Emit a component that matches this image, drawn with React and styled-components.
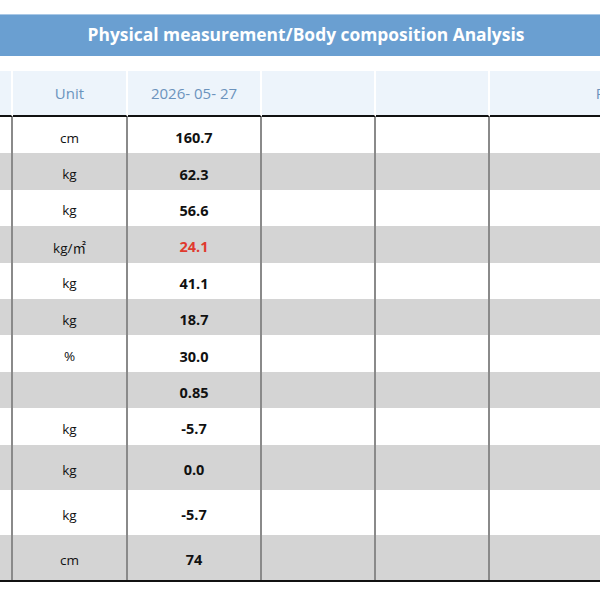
import React from 'react';
import styled, { createGlobalStyle } from 'styled-components';

const GlobalStyle = createGlobalStyle`
  html, body {
    margin: 0;
    padding: 0;
    background: #fff;
    font-family: "Open Sans", "Noto Sans CJK KR", sans-serif;
  }
`;

const rows = [
  { unit: 'cm', value: '160.7' },
  { unit: 'kg', value: '62.3', shade: true },
  { unit: 'kg', value: '56.6' },
  { unit: 'kg/㎡', value: '24.1', shade: true, alert: true },
  { unit: 'kg', value: '41.1' },
  { unit: 'kg', value: '18.7', shade: true },
  { unit: '%', value: '30.0' },
  { unit: '', value: '0.85', shade: true },
  { unit: 'kg', value: '-5.7' },
  { unit: 'kg', value: '0.0', shade: true, tall: true },
  { unit: 'kg', value: '-5.7', tall: true },
  { unit: 'cm', value: '74', shade: true, tall: true },
];

function App() {
  return (
    <Page>
      <GlobalStyle />
      <Sheet>
        <TitleBar>Physical measurement/Body composition Analysis</TitleBar>
        <Table>
          <colgroup>
            <col style={{ width: 208 }} />
            <col style={{ width: 115 }} />
            <col style={{ width: 134 }} />
            <col style={{ width: 114 }} />
            <col style={{ width: 114 }} />
            <col />
          </colgroup>
          <thead>
            <tr>
              <HeadCell />
              <HeadCell>Unit</HeadCell>
              <HeadCell>2026- 05- 27</HeadCell>
              <HeadCell />
              <HeadCell />
              <HeadCell $shift>Reference range</HeadCell>
            </tr>
          </thead>
          <tbody>
            {rows.map((r, i) => (
              <Row key={i} $shade={r.shade} $tall={r.tall}>
                <Cell />
                <Cell>{r.unit}</Cell>
                <ValueCell $alert={r.alert}>{r.value}</ValueCell>
                <Cell />
                <Cell />
                <Cell />
              </Row>
            ))}
          </tbody>
        </Table>
      </Sheet>
    </Page>
  );
}

export default App;

const Page = styled.div`
  width: 600px;
  height: 600px;
  overflow: hidden;
  padding-top: 14px;
  box-sizing: border-box;
`;

const Sheet = styled.div`
  width: 1002px;
  margin-left: -195px;
`;

const TitleBar = styled.div`
  height: 42px;
  padding-bottom: 3px;
  background: #6a9fd1;
  color: #fff;
  font-weight: 700;
  font-size: 17.4px;
  display: flex;
  align-items: center;
  justify-content: center;
  border-top: 1px solid #a9c8e6;
  box-sizing: border-box;
`;

const Table = styled.table`
  margin-top: 15px;
  width: 100%;
  table-layout: fixed;
  border-collapse: separate;
  border-spacing: 0;
  border-bottom: 2px solid #111;
`;

const HeadCell = styled.th`
  height: 44px;
  padding: 0 0 0 ${(p) => (p.$shift ? '9px' : '0')};
  background: #edf4fb;
  color: #6b93bd;
  font-weight: 400;
  font-size: 15px;
  text-align: center;
  border-right: 2px solid #fff;
  border-bottom: 2px solid #111;
  white-space: nowrap;
  overflow: hidden;
  &:last-child {
    border-right: none;
  }
`;

const Row = styled.tr`
  height: ${(p) => (p.$tall ? '45px' : '36.4px')};
  background: ${(p) => (p.$shade ? '#d4d4d4' : '#fff')};
`;

const Cell = styled.td`
  padding: 5px 0 0;
  font-size: 13.5px;
  color: #111;
  text-align: center;
  border-right: 2px solid #8a8a8a;
  white-space: nowrap;
  overflow: hidden;
  box-sizing: border-box;
  &:last-child {
    border-right: none;
  }
`;

const ValueCell = styled(Cell)`
  font-size: 14.5px;
  font-weight: 700;
  color: ${(p) => (p.$alert ? '#e03a2e' : '#111')};
`;
